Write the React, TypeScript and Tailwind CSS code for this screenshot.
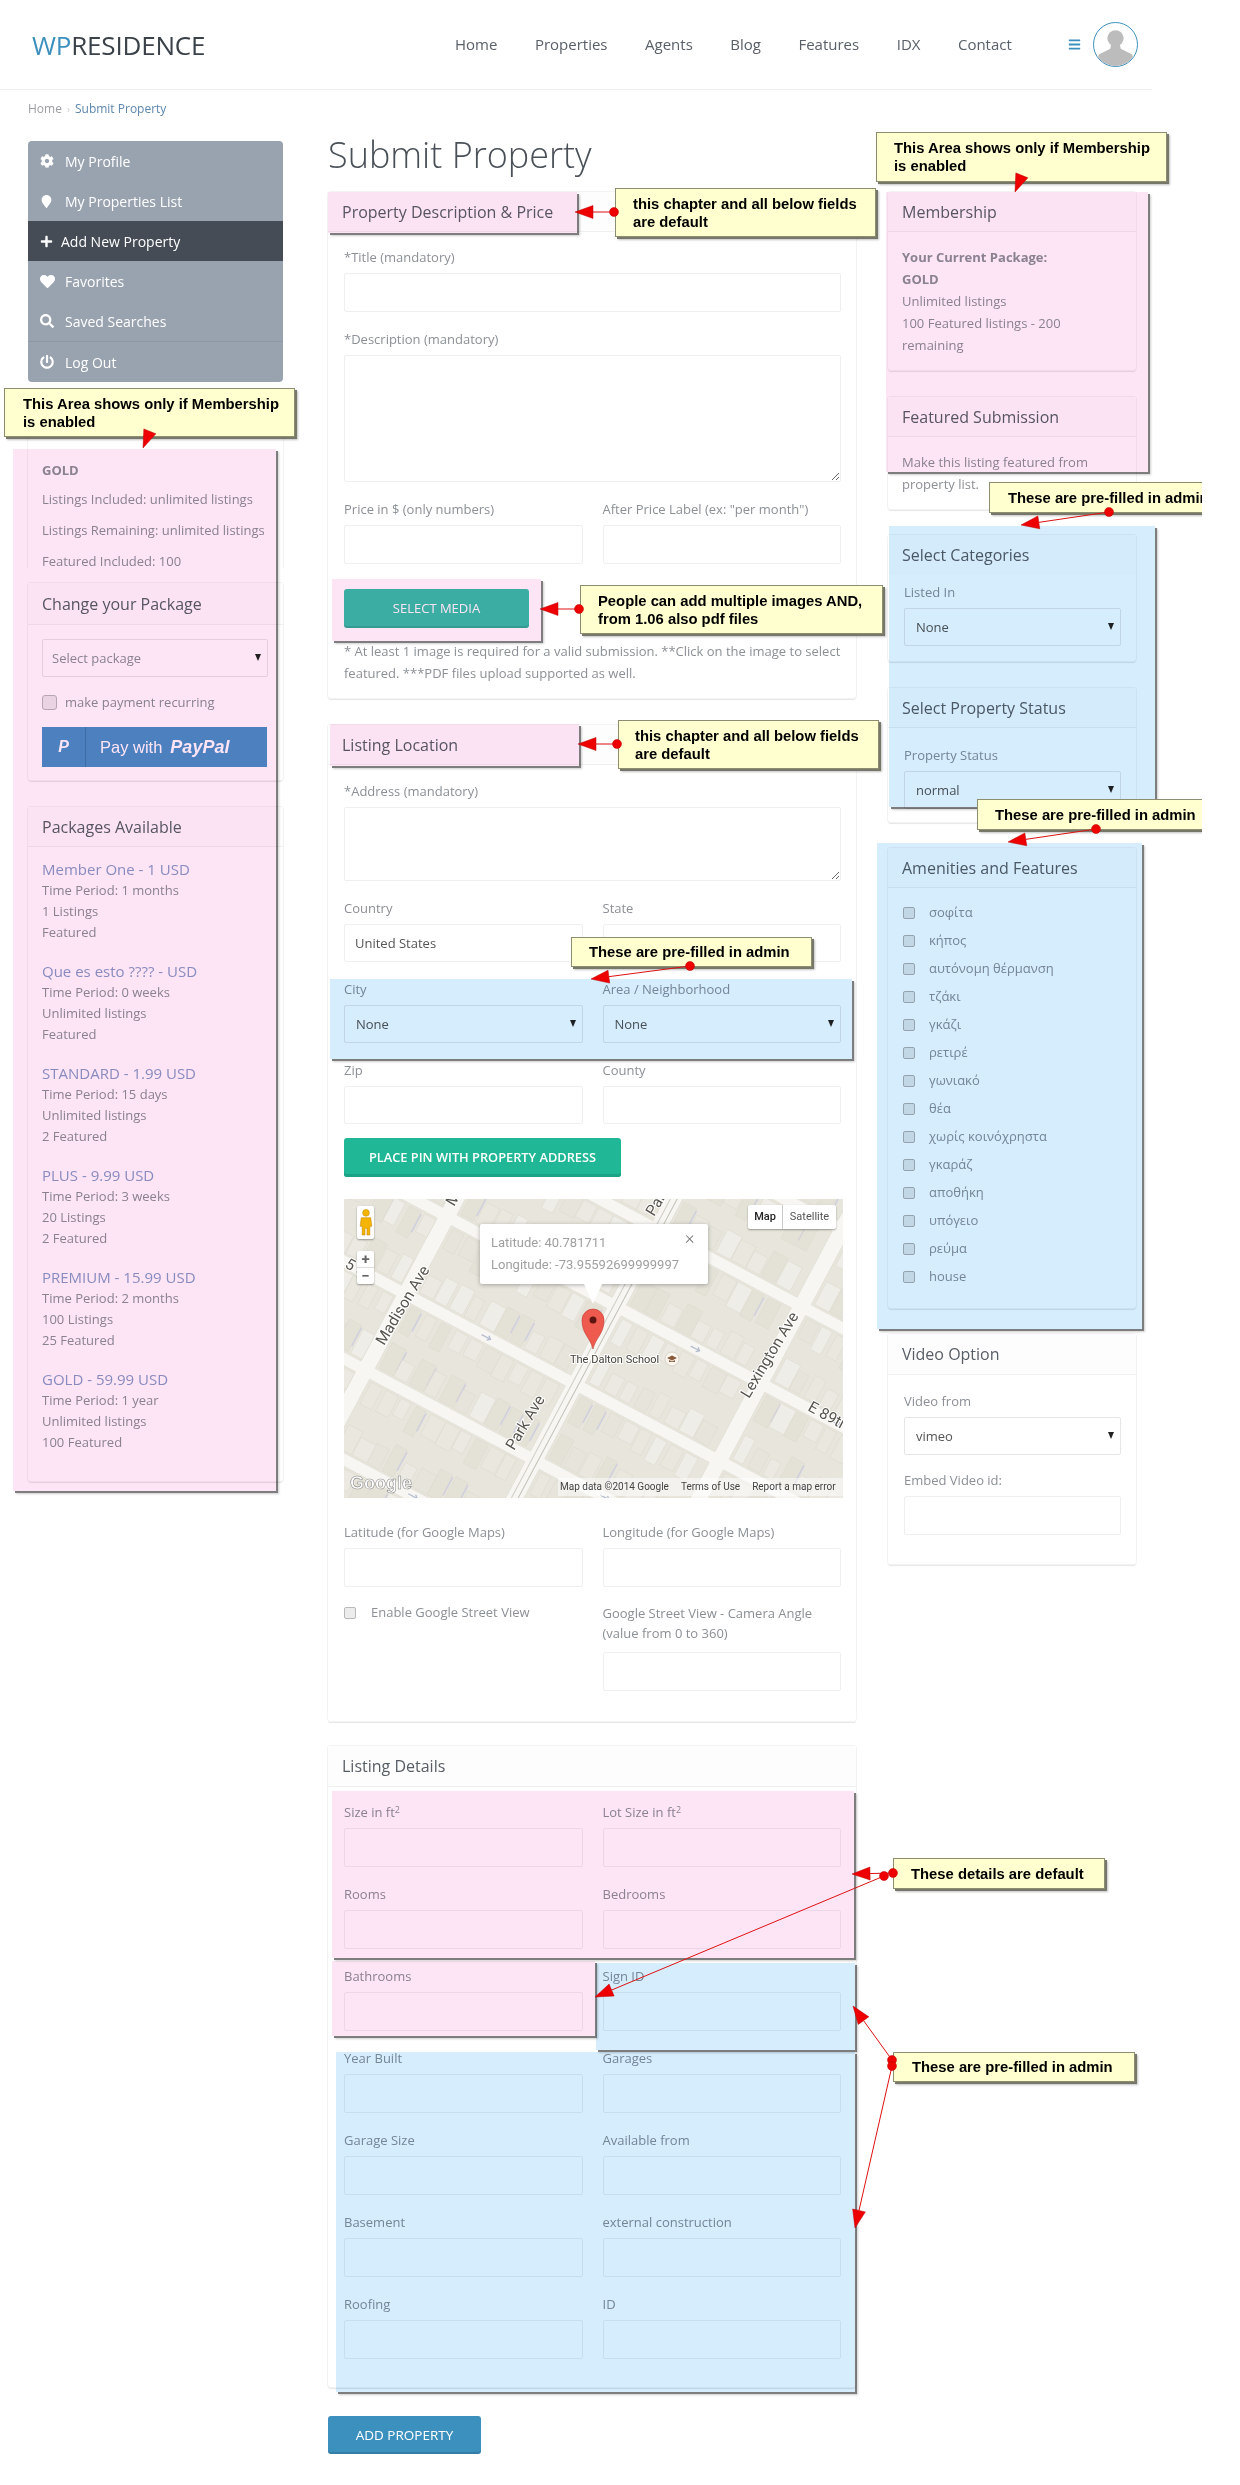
import { ReactNode } from 'react';
import { FaBars, FaCog, FaHeart, FaMapMarker, FaPlus, FaPowerOff, FaSearch } from 'react-icons/fa';

const menu = [
  { label: 'My Profile', icon: <FaCog className="text-[14px]" /> },
  { label: 'My Properties List', icon: <FaMapMarker className="text-[13px]" /> },
  { label: 'Add New Property', icon: <FaPlus className="text-[13px]" />, active: true },
  { label: 'Favorites', icon: <FaHeart className="text-[15px]" /> },
  { label: 'Saved Searches', icon: <FaSearch className="text-[14px]" /> },
];

const packages = [
  ['Member One - 1 USD', 'Time Period: 1 months', '1 Listings', 'Featured'],
  ['Que es esto ???? - USD', 'Time Period: 0 weeks', 'Unlimited listings', 'Featured'],
  ['STANDARD - 1.99 USD', 'Time Period: 15 days', 'Unlimited listings', '2 Featured'],
  ['PLUS - 9.99 USD', 'Time Period: 3 weeks', '20 Listings', '2 Featured'],
  ['PREMIUM - 15.99 USD', 'Time Period: 2 months', '100 Listings', '25 Featured'],
  ['GOLD - 59.99 USD', 'Time Period: 1 year', 'Unlimited listings', '100 Featured'],
];

const amenities = ['σοφίτα', 'κήπος', 'αυτόνομη θέρμανση', 'τζάκι', 'γκάζι', 'ρετιρέ', 'γωνιακό', 'θέα', 'χωρίς κοινόχρηστα', 'γκαράζ', 'αποθήκη', 'υπόγειο', 'ρεύμα', 'house'];

const detailRows: ReactNode[][] = [
  [<>Size in ft<sup className="text-[9px]">2</sup></>, <>Lot Size in ft<sup className="text-[9px]">2</sup></>],
  ['Rooms', 'Bedrooms'],
  ['Bathrooms', 'Sign ID'],
  ['Year Built', 'Garages'],
  ['Garage Size', 'Available from'],
  ['Basement', 'external construction'],
  ['Roofing', 'ID'],
];

function Card({ title, className = '', children }: { title: string; className?: string; children: ReactNode }) {
  return (
    <div className={`rounded-[3px] bg-white shadow-[0_0_0_1px_#f3f3f3,0_2px_1px_#e6e6e6] ${className}`}>
      <div className="flex h-10 items-center border-b border-[#f0f0f0] bg-[#fdfdfd] pl-[14px] text-[16px] text-[#585e66]">{title}</div>
      {children}
    </div>
  );
}

function Label({ children }: { children: ReactNode }) {
  return <div className="mb-[7px] h-5 text-[13px] leading-[22px] text-[#8b9096]">{children}</div>;
}

function TextInput({ className = 'h-[39px]', value }: { className?: string; value?: string }) {
  return (
    <input
      readOnly
      value={value ?? ''}
      className={`block w-full rounded-[2px] border border-[#efefef] bg-white px-[10px] text-[13px] text-[#555] outline-none ${className}`}
    />
  );
}

function Select({ value, className = 'h-[38px]' }: { value: string; className?: string }) {
  return (
    <div className={`relative rounded-[2px] border border-[#e6e6e6] bg-white pl-[11px] text-[13px] leading-[36px] text-[#555] ${className}`}>
      {value}
      <span className="absolute right-[6px] top-[14px] h-0 w-0 border-x-[3.5px] border-t-[7px] border-x-transparent border-t-[#222]" />
    </div>
  );
}

function Field({ label, className = 'h-[39px]' }: { label: ReactNode; className?: string }) {
  return (
    <div className="mb-4">
      <Label>{label}</Label>
      <TextInput className={className} />
    </div>
  );
}

function Callout({ className, children }: { className: string; children: ReactNode }) {
  return (
    <div className={`absolute whitespace-nowrap border border-[#8d8d70] bg-[#ffffcf] font-['Liberation_Sans',Arial,sans-serif] text-[14.8px] font-bold leading-[18px] text-black shadow-[2px_2px_0_#77776a,3px_3px_2px_rgba(0,0,0,0.25)] ${className}`}>
      {children}
    </div>
  );
}

function Arrow({ from, to, dot = true, head = true }: { from: [number, number]; to: [number, number]; dot?: boolean; head?: boolean }) {
  const dx = to[0] - from[0];
  const dy = to[1] - from[1];
  const len = Math.hypot(dx, dy);
  const ux = dx / len;
  const uy = dy / len;
  const bx = to[0] - ux * 18;
  const by = to[1] - uy * 18;
  const pts = `${to[0]},${to[1]} ${bx - uy * 6.5},${by + ux * 6.5} ${bx + uy * 6.5},${by - ux * 6.5}`;
  return (
    <g>
      <line x1={from[0]} y1={from[1]} x2={bx} y2={by} stroke="#dd1111" strokeWidth="1" />
      {head && <polygon points={pts} fill="#ee0000" stroke="#b80000" strokeWidth="0.5" />}
      {dot && <circle cx={from[0]} cy={from[1]} r="4.5" fill="#ee0000" stroke="#b80000" strokeWidth="0.5" />}
    </g>
  );
}

// cheap repeatable noise, the building texture should not change between runs
function noise(n: number) {
  const v = Math.sin(n * 127.1 + 11.7) * 43758.5453;
  return v - Math.floor(v);
}

const avenues = [-530, -360, -192, 0, 163, 338, 510];
const streets = [-310, -222, -135, -48, 40, 126, 215, 302];
const shades = ['#ece9e2', '#e7e4db', '#eae7df', '#efede7', '#e4e1d7'];

function MapBlocks() {
  const items: ReactNode[] = [];
  let key = 0;
  for (let a = 0; a < avenues.length - 1; a++) {
    for (let s = 0; s < streets.length - 1; s++) {
      const x0 = avenues[a] + 8;
      const x1 = avenues[a + 1] - 8;
      const y0 = streets[s] + 6;
      const y1 = streets[s + 1] - 6;
      items.push(<rect key={key++} x={x0} y={y0} width={x1 - x0} height={y1 - y0} fill="#e8e5dc" stroke="#dfdcd2" strokeWidth="0.6" />);
      for (let x = x0 + 3; x < x1 - 10; x += 17) {
        for (const band of [0, 1]) {
          const n = noise(key);
          const h = 18 + n * 12;
          const w = 11 + noise(key + 5) * 6;
          const y = band === 0 ? y0 + 2 : y1 - 2 - h;
          items.push(<rect key={key++} x={x} y={y} width={Math.min(w, x1 - x)} height={h} fill={shades[Math.floor(n * 5)]} stroke="#dcd9cf" strokeWidth="0.5" />);
          if (n > 0.86) {
            items.push(<rect key={key++} x={x + w} y={y + 2} width="1.5" height={h * 0.7} fill="#cfcfde" />);
          }
        }
      }
    }
  }
  return <>{items}</>;
}

function MapPicture() {
  return (
    <svg viewBox="0 0 499 299" className="block h-[299px] w-[499px] font-['Roboto',sans-serif]">
      <rect width="499" height="299" fill="#f7f6f2" />
      <g transform="translate(250 150) rotate(28)">
        <MapBlocks />
        <line x1="-3" y1="-400" x2="-3" y2="400" stroke="#cfcdc4" strokeWidth="1" />
        <line x1="3" y1="-400" x2="3" y2="400" stroke="#c2c0b7" strokeWidth="1" />
        {[[-120, -48], [90, -48], [-100, 40], [250, 126], [-280, 40], [80, 126], [-90, 215], [250, -48]].map(([x, y]) => (
          <path key={`${x}${y}`} d={`M${x - 6} ${y} h10 m-3 -2.5 l3 2.5 l-3 2.5`} fill="none" stroke="#b4bcd0" strokeWidth="1.3" />
        ))}
      </g>
      <g fill="#57544e" fontSize="15.5" stroke="#ffffff" strokeWidth="2" paintOrder="stroke">
        <text transform="translate(40 147) rotate(-59)">Madison Ave</text>
        <text transform="translate(170 252) rotate(-59)">Park Ave</text>
        <text transform="translate(405 200) rotate(-59)">Lexington Ave</text>
        <text transform="translate(463 211) rotate(29)">E 89th</text>
        <text transform="translate(110 8) rotate(-59)">M</text>
        <text transform="translate(310 18) rotate(-59)">Par</text>
        <text transform="translate(0 68) rotate(29)">5 S</text>
      </g>
      <text x="226" y="164" fill="#45423c" fontSize="11" stroke="#ffffff" strokeWidth="2" paintOrder="stroke">The Dalton School</text>
      <circle cx="328" cy="160" r="7" fill="#fbf7f0" stroke="#d8d2c6" />
      <path d="M323 159l5-2.5 5 2.5-5 2.5zM325 161v2h6v-2l-3 1.4z" fill="#8a5a3c" />
      <g transform="translate(249 121)">
        <path d="M0 29C-3 17-11 14-11 0a11 11 0 0 1 22 0C11 14 3 17 0 29z" fill="#ee5a4e" stroke="#c43a30" strokeWidth="0.6" />
        <circle r="3.5" fill="#5e1510" />
      </g>
      <text x="6" y="290" fontFamily="Liberation Sans, sans-serif" fontSize="18" fontWeight="bold" fill="#ffffff" stroke="#8d8d8d" strokeWidth="0.6">Google</text>
    </svg>
  );
}

function MapPanel() {
  return (
    <div className="relative mb-[23px] h-[299px] w-[499px] overflow-hidden font-['Roboto',sans-serif]">
      <MapPicture />
      <div className="absolute left-[404px] top-[6px] flex h-6 w-[88px] rounded-[2px] bg-white text-[11px] leading-6 text-[#555] shadow-[0_1px_2px_rgba(0,0,0,0.35)]">
        <span className="w-[35px] border-r border-[#ccc] text-center font-medium text-[#222]">Map</span>
        <span className="flex-1 text-center">Satellite</span>
      </div>
      <div className="absolute left-[13px] top-[7px] flex h-[33px] w-[17px] justify-center rounded-[2px] bg-white pt-[3px] shadow-[0_1px_2px_rgba(0,0,0,0.35)]">
        <svg viewBox="0 0 14 28" className="h-[27px] w-[14px]">
          <circle cx="7" cy="4" r="3.5" fill="#f5b400" stroke="#b97d00" strokeWidth="0.5" />
          <path d="M2 9h10l1 9h-2v9H8v-7H6v7H3v-9H1z" fill="#f5b400" stroke="#b97d00" strokeWidth="0.5" />
        </svg>
      </div>
      <div className="absolute left-[13px] top-[52px] h-[33px] w-[17px] rounded-[2px] bg-white text-center text-[15px] font-bold leading-4 text-[#666] shadow-[0_1px_2px_rgba(0,0,0,0.35)]">
        <div className="h-[17px] border-b border-[#ddd]">+</div>
        <div>−</div>
      </div>
      <div className="absolute left-[136px] top-[25px] h-[60px] w-[228px] rounded-[2px] bg-white pl-[11px] pt-[8px] text-[13px] leading-[22px] text-[#a0a0a0] shadow-[0_1px_4px_rgba(0,0,0,0.3)]">
        <div>Latitude: 40.781711</div>
        <div>Longitude: -73.95592699999997</div>
        <span className="absolute left-[205px] top-[3px] text-[18px] font-light text-[#777]">×</span>
        <span className="absolute left-[104px] top-[60px] h-0 w-0 border-x-[9px] border-t-[20px] border-x-transparent border-t-white" />
      </div>
      <div className="absolute bottom-[2px] left-[214px] h-[18px] w-[285px] whitespace-nowrap bg-white/50 pl-[2px] text-[10px] leading-[18px] text-[#444]">
        Map data ©2014 Google<span className="ml-3">Terms of Use</span><span className="ml-3">Report a map error</span>
      </div>
    </div>
  );
}

function LeftColumn() {
  return (
    <div className="w-[255px] shrink-0">
      <div className="overflow-hidden rounded-[4px] bg-[#99a3b0] text-[14px] text-white">
        {menu.map((m) => (
          <div key={m.label} className={`flex h-10 items-center pl-3 ${m.active ? 'bg-[#454c56]' : ''}`}>
            <span className={m.active ? 'w-[21px]' : 'w-[25px]'}>{m.icon}</span>
            {m.label}
          </div>
        ))}
        <div className="flex h-[41px] items-center border-t border-[#8d97a5] pl-3">
          <span className="w-[25px]"><FaPowerOff className="text-[14px]" /></span>
          Log Out
        </div>
      </div>

      <div className="mt-[26px] h-40 bg-white shadow-[-1px_0_0_#f3f3f3,1px_0_0_#f3f3f3,0_-1px_0_#f3f3f3]">
        <div className="flex h-10 items-center pl-[14px] text-[16px] text-[#585e66]">Your Current Package</div>
        <div className="pl-[14px] pt-3 text-[13px] leading-5 text-[#8b9096]">
          <div className="font-bold">GOLD</div>
          <div className="mt-[9px]">Listings Included: unlimited listings</div>
          <div className="mt-[11px]">Listings Remaining: unlimited listings</div>
          <div className="mt-[11px]">Featured Included: 100</div>
        </div>
      </div>

      <Card title="Change your Package" className="mt-[15px] [&>div:first-child]:h-[42px]">
        <div className="pb-[13px] pl-[14px] pr-[15px] pt-[14px]">
          <Select value="Select package" className="h-[38px] !pl-[9px] !text-[#8b9096]" />
          <label className="mt-[18px] flex h-[15px] items-center text-[13px] text-[#8b9096]">
            <input type="checkbox" readOnly className="mr-2 h-[15px] w-[15px] appearance-none rounded-[3px] border border-[#b9b9b9] bg-[#ececec]" />
            make payment recurring
          </label>
          <div className="mt-[17px] flex h-10 w-[225px] items-center bg-[#4c8ec6] font-['Liberation_Sans',Arial,sans-serif] text-white">
            <span className="w-[44px] border-r border-[#3f78ab] text-center text-[16px] font-bold italic leading-10">P</span>
            <span className="ml-[14px] text-[16.5px]">Pay with</span>
            <span className="ml-[8px] text-[18px] font-bold italic">PayPal</span>
          </div>
        </div>
      </Card>

      <Card title="Packages Available" className="mt-[27px]">
        <div className="pb-[10px] pl-[14px] pt-3">
          {packages.map((p) => (
            <div key={p[0]} className="mb-[18px]">
              <div className="h-5 text-[15px] leading-5 text-[#8a9bc6]">{p[0]}</div>
              <div className="mt-px text-[13px] leading-[21px] text-[#8b9096]">
                <div>{p[1]}</div>
                <div>{p[2]}</div>
                <div>{p[3]}</div>
              </div>
            </div>
          ))}
        </div>
      </Card>
    </div>
  );
}

function MainColumn() {
  return (
    <div className="ml-[45px] w-[528px] shrink-0">
      <h1 className="h-[51px] text-[36px] font-light leading-[28px] text-[#4a5058]">Submit Property</h1>

      <Card title="Property Description & Price">
        <div className="pb-[14px] pl-4 pr-[15px] pt-[14px]">
          <Field label="*Title (mandatory)" />
          <Label>*Description (mandatory)</Label>
          <textarea readOnly className="mb-4 block h-[127px] w-full rounded-[2px] border border-[#efefef] outline-none" />
          <div className="grid grid-cols-2 gap-x-5">
            <Field label="Price in $ (only numbers)" />
            <Field label={'After Price Label (ex: "per month")'} />
          </div>
          <div className="mt-[9px] flex h-[39px] w-[185px] items-center justify-center rounded-[3px] bg-[#3bc1a8] text-[13px] text-white shadow-[inset_0_-2px_0_rgba(0,0,0,0.1)]">SELECT MEDIA</div>
          <p className="mt-3 text-[13px] leading-[22px] text-[#8b9096]">* At least 1 image is required for a valid submission. **Click on the image to select featured. ***PDF files upload supported as well.</p>
        </div>
      </Card>

      <Card title="Listing Location" className="mt-[27px]">
        <div className="pb-[30px] pl-4 pr-[15px] pt-[15px]">
          <Label>*Address (mandatory)</Label>
          <textarea readOnly className="mb-4 block h-[74px] w-full rounded-[2px] border border-[#efefef] outline-none" />
          <div className="grid grid-cols-2 gap-x-5">
            <div className="mb-4">
              <Label>Country</Label>
              <TextInput className="h-[38px]" value="United States" />
            </div>
            <Field label="State" className="h-[38px]" />
            <div className="mb-4">
              <Label>City</Label>
              <Select value="None" />
            </div>
            <div className="mb-4">
              <Label>Area / Neighborhood</Label>
              <Select value="None" />
            </div>
            <Field label="Zip" className="h-[38px]" />
            <Field label="County" className="h-[38px]" />
          </div>
          <div className="-mt-[2px] mb-[22px] flex h-[39px] w-[277px] items-center justify-center rounded-[3px] bg-[#20b796] text-[12.8px] font-semibold text-white shadow-[inset_0_-3px_0_#1aa386]">PLACE PIN WITH PROPERTY ADDRESS</div>
          <MapPanel />
          <div className="grid grid-cols-2 gap-x-5">
            <Field label="Latitude (for Google Maps)" />
            <Field label="Longitude (for Google Maps)" />
            <label className="flex h-5 items-center text-[13px] text-[#8b9096]">
              <input type="checkbox" readOnly className="mr-[15px] h-3 w-3 appearance-none rounded-[2px] border border-[#b9b9b9] bg-[#ececec]" />
              Enable Google Street View
            </label>
            <div>
              <div className="mb-[9px] text-[13px] leading-5 text-[#8b9096]">Google Street View - Camera Angle<br />(value from 0 to 360)</div>
              <TextInput />
            </div>
          </div>
        </div>
      </Card>

      <Card title="Listing Details" className="mt-[25px] [&>div:first-child]:h-[41px]">
        <div className="pb-[12px] pl-4 pr-[15px] pt-[14px]">
          {detailRows.map((row, i) => (
            <div key={i} className="grid grid-cols-2 gap-x-5">
              <Field label={row[0]} />
              <Field label={row[1]} />
            </div>
          ))}
        </div>
      </Card>

      <div className="mt-[29px] flex h-[38px] w-[153px] items-center justify-center rounded-[3px] bg-[#3c90be] text-[13.5px] text-white shadow-[inset_0_-2px_0_rgba(0,0,0,0.12)]">ADD PROPERTY</div>
    </div>
  );
}

function RightColumn() {
  return (
    <div className="ml-8 w-[248px] shrink-0 pt-[51px]">
      <Card title="Membership">
        <div className="py-[14px] pl-[14px] pr-3 text-[13px] leading-[22px] text-[#8b9096]">
          <div className="font-bold">Your Current Package:</div>
          <div className="font-bold">GOLD</div>
          <div>Unlimited listings</div>
          <div>100 Featured listings - 200 remaining</div>
        </div>
      </Card>
      <Card title="Featured Submission" className="mt-[27px]">
        <div className="py-[14px] pl-[14px] pr-3 text-[13px] leading-[22px] text-[#8b9096]">Make this listing featured from property list.</div>
      </Card>
      <Card title="Select Categories" className="mt-[26px] [&>div:first-child]:border-b-0">
        <div className="pb-[15px] pl-4 pr-[15px] pt-[6px]">
          <Label>Listed In</Label>
          <Select value="None" />
        </div>
      </Card>
      <Card title="Select Property Status" className="mt-[27px]">
        <div className="pb-[13px] pl-4 pr-[15px] pt-4">
          <Label>Property Status</Label>
          <Select value="normal" />
        </div>
      </Card>
      <Card title="Amenities and Features" className="mt-[26px]">
        <div className="pb-[17px] pl-[15px] pt-[11px]">
          {amenities.map((a) => (
            <label key={a} className="flex h-7 items-center text-[13px] text-[#8b9096]">
              <input type="checkbox" readOnly className="mr-[14px] h-3 w-3 appearance-none rounded-[2px] border border-[#b0b0b0] bg-[#e8e8e8]" />
              {a}
            </label>
          ))}
        </div>
      </Card>
      <Card title="Video Option" className="mt-[26px] [&>div:first-child]:h-[41px]">
        <div className="pb-[29px] pl-4 pr-[15px] pt-[15px]">
          <Label>Video from</Label>
          <Select value="vimeo" />
          <div className="mt-[14px]">
            <Label>Embed Video id:</Label>
            <TextInput />
          </div>
        </div>
      </Card>
    </div>
  );
}

function Annotations() {
  const pink = "absolute bg-[#fde5f6] mix-blend-multiply shadow-[2px_2px_0_#7d7d7d,3px_3px_2px_rgba(0,0,0,0.2)]";
  const blue = "absolute bg-[#d6edfd] mix-blend-multiply shadow-[2px_2px_0_#7d7d7d,3px_3px_2px_rgba(0,0,0,0.2)]";
  return (
    <>
      <div className={`${pink} left-[13px] top-[449px] h-[1042px] w-[263px]`} />
      <div className={`${pink} left-[328px] top-[192px] h-[41px] w-[249px]`} />
      <div className={`${pink} left-[332px] top-[579px] h-[62px] w-[209px]`} />
      <div className={`${pink} left-[330px] top-[724px] h-[42px] w-[249px]`} />
      <div className={`${pink} left-[886px] top-[192px] h-[280px] w-[262px]`} />
      <div className={`${pink} left-[332px] top-[1791px] h-[167px] w-[522px]`} />
      <div className={`${pink} left-[332px] top-[1961px] h-[75px] w-[263px]`} />
      <div className={`${blue} left-[330px] top-[979px] h-[80px] w-[522px]`} />
      <div className={`${blue} left-[889px] top-[526px] h-[281px] w-[266px]`} />
      <div className={`${blue} left-[877px] top-[843px] h-[486px] w-[265px]`} />
      <div className={`${blue} left-[596px] top-[1963px] h-[87px] w-[259px]`} />
      <div className={`${blue} left-[336px] top-[2052px] h-[340px] w-[519px]`} />

      <Callout className="left-[876px] top-[132px] h-[50px] w-[291px] pl-[17px] pt-[6px]">This Area shows only if Membership<br />is enabled</Callout>
      <Callout className="left-[4px] top-[388px] h-[49px] w-[291px] pl-[18px] pt-[6px]">This Area shows only if Membership<br />is enabled</Callout>
      <Callout className="left-[615px] top-[188px] h-[49px] w-[261px] pl-[17px] pt-[6px]">this chapter and all below fields<br />are default</Callout>
      <Callout className="left-[580px] top-[585px] h-[49px] w-[303px] pl-[17px] pt-[6px]">People can add multiple images AND,<br />from 1.06 also pdf files</Callout>
      <Callout className="left-[618px] top-[720px] h-[49px] w-[261px] pl-[16px] pt-[6px]">this chapter and all below fields<br />are default</Callout>
      <Callout className="left-[571px] top-[937px] h-[30px] w-[241px] pl-[17px] pt-[5px]">These are pre-filled in admin</Callout>
      <Callout className="left-[989px] top-[482px] h-[31px] w-[260px] pl-[18px] pt-[6px]">These are pre-filled in admin</Callout>
      <Callout className="left-[977px] top-[799px] h-[31px] w-[260px] pl-[17px] pt-[6px]">These are pre-filled in admin</Callout>
      <Callout className="left-[893px] top-[1858px] h-[31px] w-[212px] pl-[17px] pt-[6px]">These details are default</Callout>
      <Callout className="left-[893px] top-[2052px] h-[30px] w-[242px] pl-[18px] pt-[5px]">These are pre-filled in admin</Callout>

      <svg viewBox="0 0 1202 2485" className="absolute left-0 top-0 h-[2485px] w-[1202px]">
        <Arrow from={[1022, 175]} to={[1015, 192]} dot={false} />
        <Arrow from={[150, 431]} to={[143, 448]} dot={false} />
        <Arrow from={[614, 212]} to={[575, 212]} />
        <Arrow from={[579, 609]} to={[540, 609]} />
        <Arrow from={[617, 744]} to={[578, 744]} />
        <Arrow from={[690, 966]} to={[591, 979]} />
        <Arrow from={[1109, 512]} to={[1021, 525]} />
        <Arrow from={[1096, 829]} to={[1008, 842]} />
        <Arrow from={[893, 1873]} to={[852, 1874]} />
        <Arrow from={[884, 1876]} to={[595, 1997]} />
        <Arrow from={[892, 2060]} to={[853, 2006]} />
        <Arrow from={[892, 2066]} to={[855, 2228]} />
      </svg>
    </>
  );
}

export default function App() {
  return (
    <div className="relative h-[2485px] w-[1202px] overflow-hidden bg-white font-['Open_Sans',sans-serif]">
      <header className="flex h-[90px] w-[1152px] items-center border-b border-[#eeeeee] pl-8">
        <div className="w-[423px] text-[26px] leading-none tracking-[-0.2px] text-[#3a4149]"><span className="text-[#3c90be]">WP</span>RESIDENCE</div>
        <nav className="flex items-center gap-[37.5px] text-[15px] text-[#5a6068]">
          <span>Home</span>
          <span>Properties</span>
          <span>Agents</span>
          <span>Blog</span>
          <span>Features</span>
          <span>IDX</span>
          <span>Contact</span>
        </nav>
        <FaBars className="ml-[56px] text-[13px] text-[#3c90be]" />
        <div className="ml-[12px] h-[45px] w-[45px] overflow-hidden rounded-full border border-[#3c90be] bg-white">
          <svg viewBox="0 0 45 45" className="h-full w-full">
            <circle cx="22.5" cy="16" r="8.5" fill="#bcbcbc" />
            <path d="M18 22h9l1 5 12 6 3 12H2l3-12 12-6z" fill="#bcbcbc" />
          </svg>
        </div>
      </header>

      <div className="flex h-[38px] items-center pl-7 text-[12px] text-[#9a9ea3]">
        Home<span className="mx-[5px] text-[10px] text-[#ccc]">›</span><span className="text-[#5d86ad]">Submit Property</span>
      </div>

      <div className="flex pl-7 pt-[13px]">
        <LeftColumn />
        <MainColumn />
        <RightColumn />
      </div>

      <Annotations />
    </div>
  );
}
